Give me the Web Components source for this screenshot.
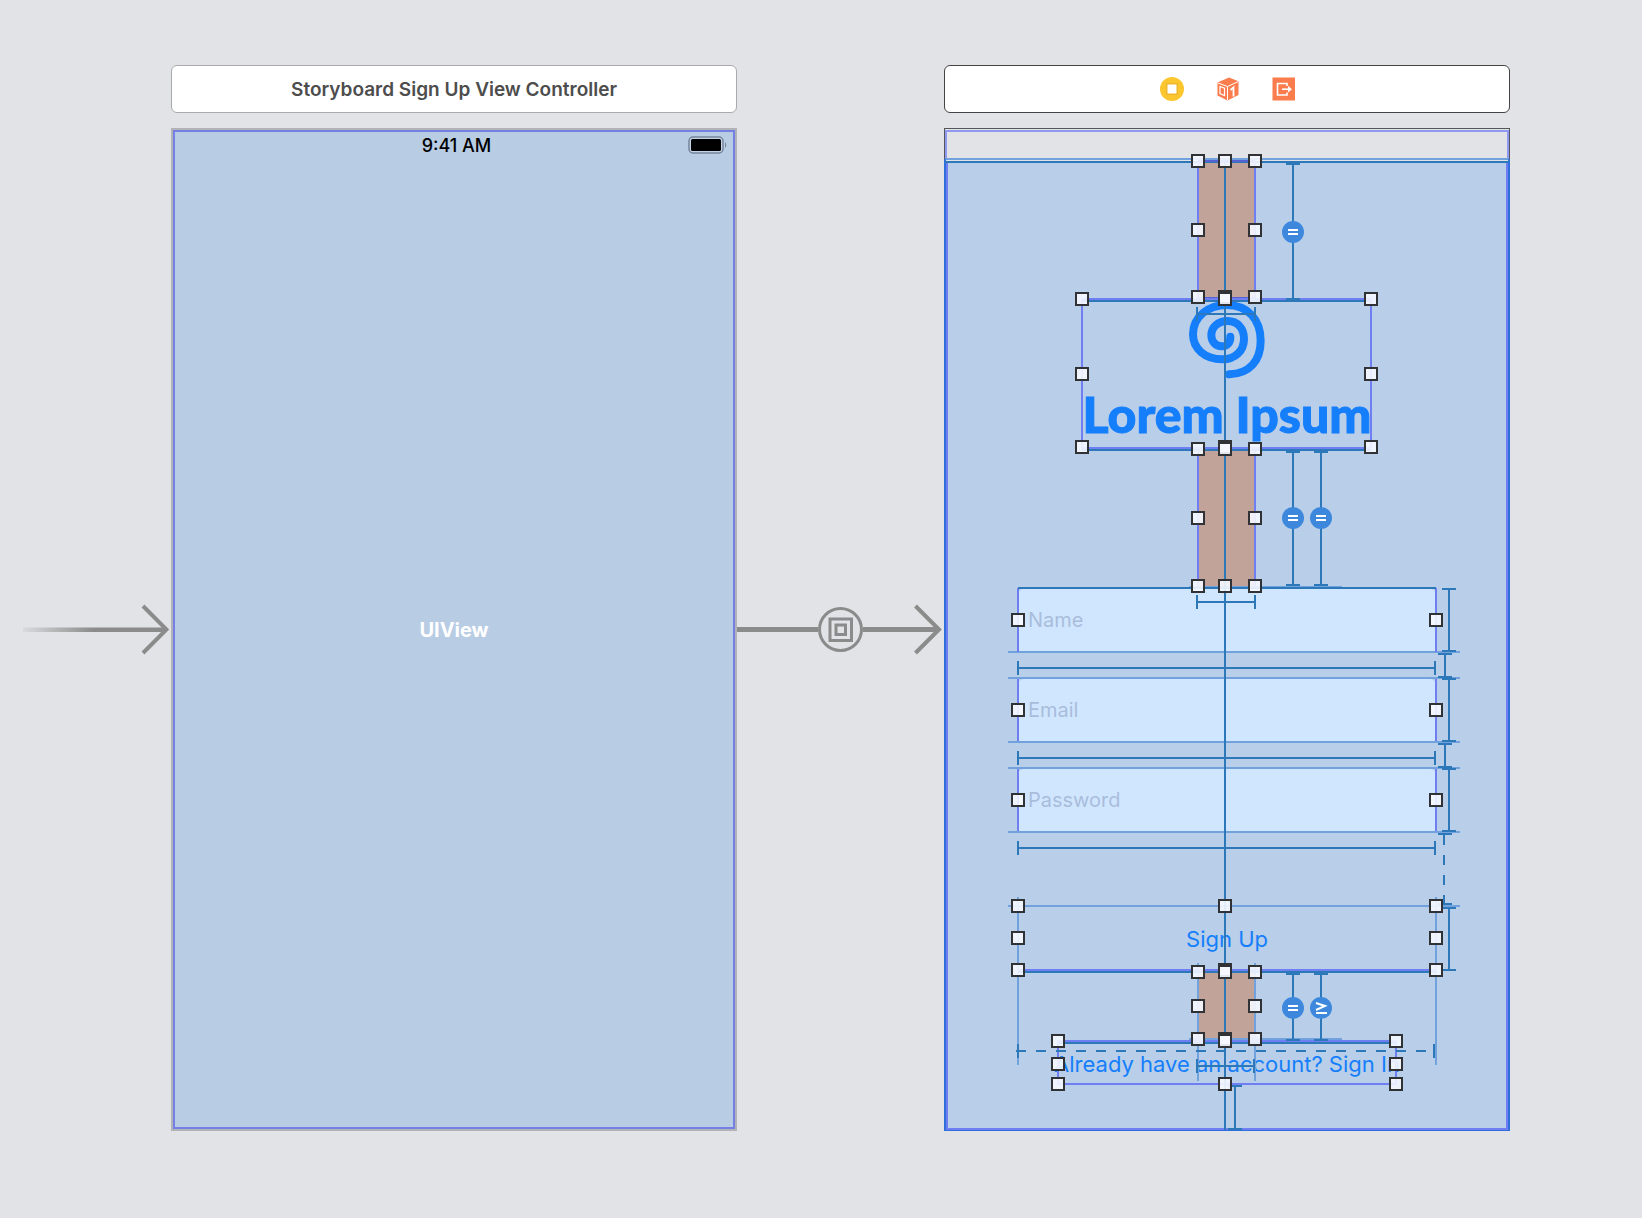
<!DOCTYPE html>
<html lang="en">
<head>
<meta charset="utf-8">
<title>Storyboard</title>
<style>
  body { margin: 0; background: #e2e3e7; font-family: Inter, "Liberation Sans", sans-serif; }
</style>
</head>
<body>
<story-board>
  <entry-arrow></entry-arrow>
  <story-scene>
    <scene-title slot="title">Storyboard Sign Up View Controller</scene-title>
    <container-view>UIView</container-view>
  </story-scene>
  <embed-segue></embed-segue>
  <story-scene selected>
    <scene-title slot="title" selected><scene-dock></scene-dock></scene-title>
    <sign-up-view></sign-up-view>
  </story-scene>
</story-board>

<script>
const define = (name, html, ready) => {
  const template = document.createElement('template');
  template.innerHTML = html;
  customElements.define(name, class extends HTMLElement {
    constructor() {
      super();
      this.attachShadow({ mode: 'open' }).append(template.content.cloneNode(true));
    }
    connectedCallback() { if (ready) ready(this, this.shadowRoot); }
  });
};

define('story-board', `
  <style>
    :host { display: grid; grid-template-columns: 171fr 566px 207fr 566px 132fr; padding: 65px 0 87px; }
  </style>
  <slot></slot>`);

define('story-scene', `
  <style>
    :host { display: flex; flex-direction: column; gap: 15px; }
    .device { box-sizing: border-box; height: 1003px; display: flex; border: 2px solid #b2b3b6; outline: 2px solid #7580e6; outline-offset: -4px; background: #b8cce4; }
    :host([selected]) .device { border: 1px solid #55565a; outline: 0; background: #b8cee9; }
    ::slotted(:not([slot])) { flex: 1; }
  </style>
  <slot name="title"></slot>
  <div class="device"><slot></slot></div>`);

define('scene-title', `
  <style>
    :host { box-sizing: border-box; height: 48px; display: flex; align-items: center; justify-content: center;
      border: 1px solid #a9aaac; border-radius: 6px; background: #fff; color: #4d4d4d; font-size: 19px; font-weight: 600; }
    :host([selected]) { border-color: #444; }
  </style>
  <slot></slot>`);

define('scene-dock', `
  <style>
    :host { display: flex; gap: 32px; padding-left: 2px; }
    button { all: unset; display: block; width: 24px; height: 24px; }
    svg { display: block; }
  </style>
  <button aria-label="View controller"><svg width="24" height="24" viewBox="0 0 24 24">
    <circle cx="12" cy="12" r="12" fill="#fcc62f"/><rect x="6" y="6" width="12" height="12" fill="#eeb62c"/><rect x="7.5" y="7.5" width="9" height="9" fill="#fff"/></svg></button>
  <button aria-label="First responder"><svg width="24" height="24" viewBox="0 0 24 24">
    <path d="M13 .5 22.500 4.200V18L11.500 23.500 1.500 18.500V5.500Z" fill="#fb7c4c"/>
    <path d="M2 6 11.500 9.500 22 4.700M11.500 9.500V23" fill="none" stroke="#fff" stroke-width="1"/>
    <path d="M4 9.500 8.500 11.200V18.500L4 16.500Z" fill="none" stroke="#fff" stroke-width="1.200"/>
    <path d="M14.500 13 17.500 10.500V19.500" fill="none" stroke="#fff" stroke-width="1.800"/></svg></button>
  <button aria-label="Exit"><svg width="24" height="24" viewBox="0 0 24 24">
    <rect x=".5" y=".5" width="22.500" height="23" fill="#fb7c4c"/>
    <path d="M15 9V6.500H5.500V18H15V15.500" fill="none" stroke="#fff" stroke-width="1.600"/>
    <path d="M10 12.200H17" stroke="#fff" stroke-width="1.600"/><path d="M16 8.800 20 12.200 16 15.600Z" fill="#fff"/></svg></button>`);

define('entry-arrow', `
  <style>
    :host { display: flex; align-items: center; justify-content: flex-end; padding: 63px 2px 0 0; }
    svg { display: block; }
  </style>
  <svg width="146" height="51" viewBox="0 0 146 51">
    <defs><linearGradient id="fade"><stop offset="0" stop-color="#8b8b8b" stop-opacity="0.1"/><stop offset=".5" stop-color="#8b8b8b"/></linearGradient></defs>
    <rect y="23.500" width="142" height="4.500" fill="url(#fade)"/>
    <path d="M120 2 143.500 25.500 120 49" fill="none" stroke="#8b8b8b" stroke-width="4"/>
  </svg>`);

define('embed-segue', `
  <style>
    :host { display: flex; align-items: center; padding-top: 63px; }
    i { flex: 1; height: 5px; background: #8b8b8b; }
    .tail { flex: 1; display: flex; align-items: center; }
    svg { display: block; }
  </style>
  <i></i>
  <svg width="45" height="45" viewBox="0 0 45 45" fill="none" stroke="#8b8b8b">
    <circle cx="22.500" cy="22.500" r="21" stroke-width="3"/>
    <rect x="12" y="12" width="21.500" height="21.500" stroke-width="3"/>
    <rect x="18" y="18" width="9.500" height="9.500" stroke-width="3"/></svg>
  <div class="tail"><i></i>
    <svg width="32" height="51" viewBox="0 0 32 51" fill="none" stroke="#8b8b8b" stroke-width="4">
      <path d="M0 25.500H26" stroke-width="5"/><path d="M3.500 2 27 25.500 3.500 49"/></svg></div>`);

define('container-view', `
  <style>
    :host { display: grid; grid-template: 30px 1fr 30px / 1fr; }
    .status { display: grid; grid-template-columns: 1fr auto 1fr; align-items: center; padding: 0 7px 0 12px; color: #000; font-size: 18px; font-weight: 500; }
    svg { grid-column: 3; justify-self: end; display: block; }
    time { grid-column: 2; }
    .name { place-self: center; color: #fff; font-size: 20px; font-weight: 700; }
  </style>
  <div class="status"><time>9:41 AM</time>
    <svg width="40" height="18" viewBox="0 0 40 18"><rect x="1" y="1" width="34" height="16" rx="4" fill="#c4d5e9" stroke="#75859a" stroke-width="1.500"/>
    <rect x="3" y="3" width="30" height="12" rx="1.500"/><path d="M37 6q2.500 3 0 6Z" fill="#75859a"/></svg></div>
  <div class="name"><slot></slot></div>`);

define('brand-logo', `
  <style>
    :host { display: flex; flex-direction: column; align-items: center; color: #157efb; }
    svg { display: block; }
    span { font: 900 50px/66px Lato, sans-serif; white-space: nowrap; -webkit-text-stroke: 1px #157efb; }
  </style>
  <svg width="80" height="80" viewBox="381 65 240 240" fill="none" stroke="currentColor" stroke-width="24" stroke-linecap="round">
    <path d="M511 172C512 190 500 202 485 201C465 200 454 185 454 168C454 142 475 125 503 125C533 125 552 148 552 178C552 215 525 240 487 240C435 240 399 208 399 165C399 112 445 77 500 77C565 77 602 122 602 184C602 245 568 283 508 285"/></svg>
  <span>Lorem Ipsum</span>`);

define('text-field', `
  <style>
    :host { display: block; }
    input { box-sizing: border-box; display: block; width: 100%; height: 64px; margin: 0; padding: 0 10px 2px; border: 0; border-radius: 6px;
      background: #d0e6ff; color: #234; font: 20px Inter, sans-serif; outline: 0; }
    input::placeholder { color: #a9bddb; opacity: 1; }
  </style>
  <input>`, (host, root) => {
    const input = root.querySelector('input');
    input.type = host.getAttribute('kind');
    input.placeholder = host.getAttribute('label');
    input.setAttribute('aria-label', host.getAttribute('label'));
  });

define('layout-spacer', `
  <style>:host { display: block; width: 58px; background: #c2a39a; }</style>`);

define('sign-up-view', `
  <style>
    :host { position: relative; display: flex; flex-direction: column; align-items: center; }
    .status { align-self: stretch; height: 34px; background: #e2e3e7; flex: none; }
    .spring { height: 138px; }
    .spring.small { height: 72px; }
    brand-logo { height: 150px; }
    form { align-self: stretch; display: flex; flex-direction: column; gap: 26px; padding: 0 73px; }
    button { all: unset; height: 64px; margin-top: 48px; text-align: center; color: #157efb; font-size: 22px; }
    a { height: 42px; line-height: 42px; color: #157efb; font-size: 22px; text-decoration: none; white-space: nowrap; }
    constraint-overlay { position: absolute; inset: -1px; }
  </style>
  <div class="status"></div>
  <layout-spacer class="spring"></layout-spacer>
  <brand-logo></brand-logo>
  <layout-spacer class="spring"></layout-spacer>
  <form>
    <text-field kind="text" label="Name"></text-field>
    <text-field kind="email" label="Email"></text-field>
    <text-field kind="password" label="Password"></text-field>
    <button type="button">Sign Up</button>
  </form>
  <layout-spacer class="spring small"></layout-spacer>
  <a href="#sign-in">Already have an account? Sign In</a>
  <constraint-overlay></constraint-overlay>`);

define('constraint-overlay', `
  <style>
    :host { display: block; pointer-events: none; }
    svg { display: block; width: 100%; height: 100%; }
    path { fill: none; stroke-width: 2; }
    .guide { stroke: #72a2dd; }
    .frame { stroke: #6f7ff3; }
    .margin { stroke: #8f99f1; }
    .rule { stroke: #2d78b9; }
    .edge { stroke: #2f6fdc; }
    .bold { stroke: #5561d2; }
    .dash { stroke-dasharray: 10 10; }
    circle { fill: #3d88dc; }
    .sign { stroke: #fff; }
    .handle { fill: #f6f8ff; fill-opacity: .9; stroke: #303236; stroke-width: 2; }
  </style>
  <svg viewBox="0 0 566 1003"></svg>`, (host, root) => {
    const out = [];
    const path = (kind, d) => out.push('<path class="' + kind + '" d="' + d + '"/>');
    // Vertical and horizontal measures with end caps.
    const tall = (x, top, bottom) => path('rule', `M${x} ${top}V${bottom}M${x - 7} ${top + 1}h14M${x - 7} ${bottom - 1}h14`);
    const wide = (y, left, right) => path('rule', `M${left} ${y}H${right}M${left} ${y - 7}v14M${right} ${y - 7}v14`);
    const badge = (x, y, sign) => {
      out.push(`<circle cx="${x}" cy="${y}" r="11"/>`);
      path('sign', sign === 'equal' ? `M${x - 5} ${y - 2}h10M${x - 5} ${y + 2}h10` : `M${x - 5} ${y - 5}L${x + 4} ${y - 2}L${x - 5} ${y + 2}M${x - 5} ${y + 5}h11`);
    };
    const handles = (xs, ys) => ys.forEach(y => xs.forEach(x =>
      out.push(`<rect class="handle" x="${x - 6}" y="${y - 6}" width="12" height="12"/>`)));

    // Guides
    path('margin', 'M2 31V3H564V31');
    path('guide', 'M1 31H565');
    path('edge', 'M1 31V1002H565V31');
    path('frame', 'M3 34V1001H563V34');
    path('rule', 'M1 34H565');
    for (const y of [524, 550, 614, 640, 704, 778]) path('guide', `M64 ${y}H516`);
    path('guide', 'M245 459H398M245 911H398M74 769V937M492 769V937M254 835V953M311 835V953');

    // Frames
    path('frame', 'M254 34V170M311 34V170M254 322V458M311 322V458');
    path('bold', 'M254 33H311M254 170H311M254 320H311');
    path('frame', 'M138 171V320H427V171ZM74 460V524M492 460V524M74 551V613M492 551V613M74 641V703M492 641V703M74 842H492M114 913V956H452V913Z');
    path('rule', 'M138 173H427M138 322H427M74 460H492M74 844H492M114 915H452');
    path('rule', 'M281 34V1002');

    // Measures
    tall(349, 35, 172);
    tall(349, 323, 458); tall(377, 323, 458);
    tall(349, 845, 913); tall(377, 845, 913);
    for (const top of [460, 550, 640]) tall(505, top, top + 64);
    tall(505, 779, 843);
    tall(501, 525, 550); tall(501, 615, 640);
    path('rule', 'M494 706h14M494 776h14');
    path('rule dash', 'M500 707V778');
    tall(291, 957, 1002);
    wide(186, 253, 311); wide(474, 253, 311);
    for (const y of [540, 630, 720]) wide(y, 74, 491);
    wide(938, 253, 310);
    path('rule', 'M74 916v14M490 916v14');
    path('rule dash', 'M72 923H490');

    badge(349, 104, 'equal');
    badge(349, 390, 'equal'); badge(377, 390, 'equal');
    badge(349, 880, 'equal'); badge(377, 880, 'atLeast');

    // Resize handles
    handles([254, 281, 311], [33]);
    handles([254, 311], [102, 169, 321, 390, 844, 878, 911]);
    handles([281], [169, 171, 319, 321, 778, 842, 844, 911, 913, 956]);
    handles([254, 281, 311], [458]);
    handles([138, 427], [171, 246, 319]);
    handles([74, 492], [492, 582, 672, 778, 810, 842]);
    handles([114, 452], [913, 936, 956]);
    root.querySelector('svg').innerHTML = out.join('');
  });
</script>
</body>
</html>
